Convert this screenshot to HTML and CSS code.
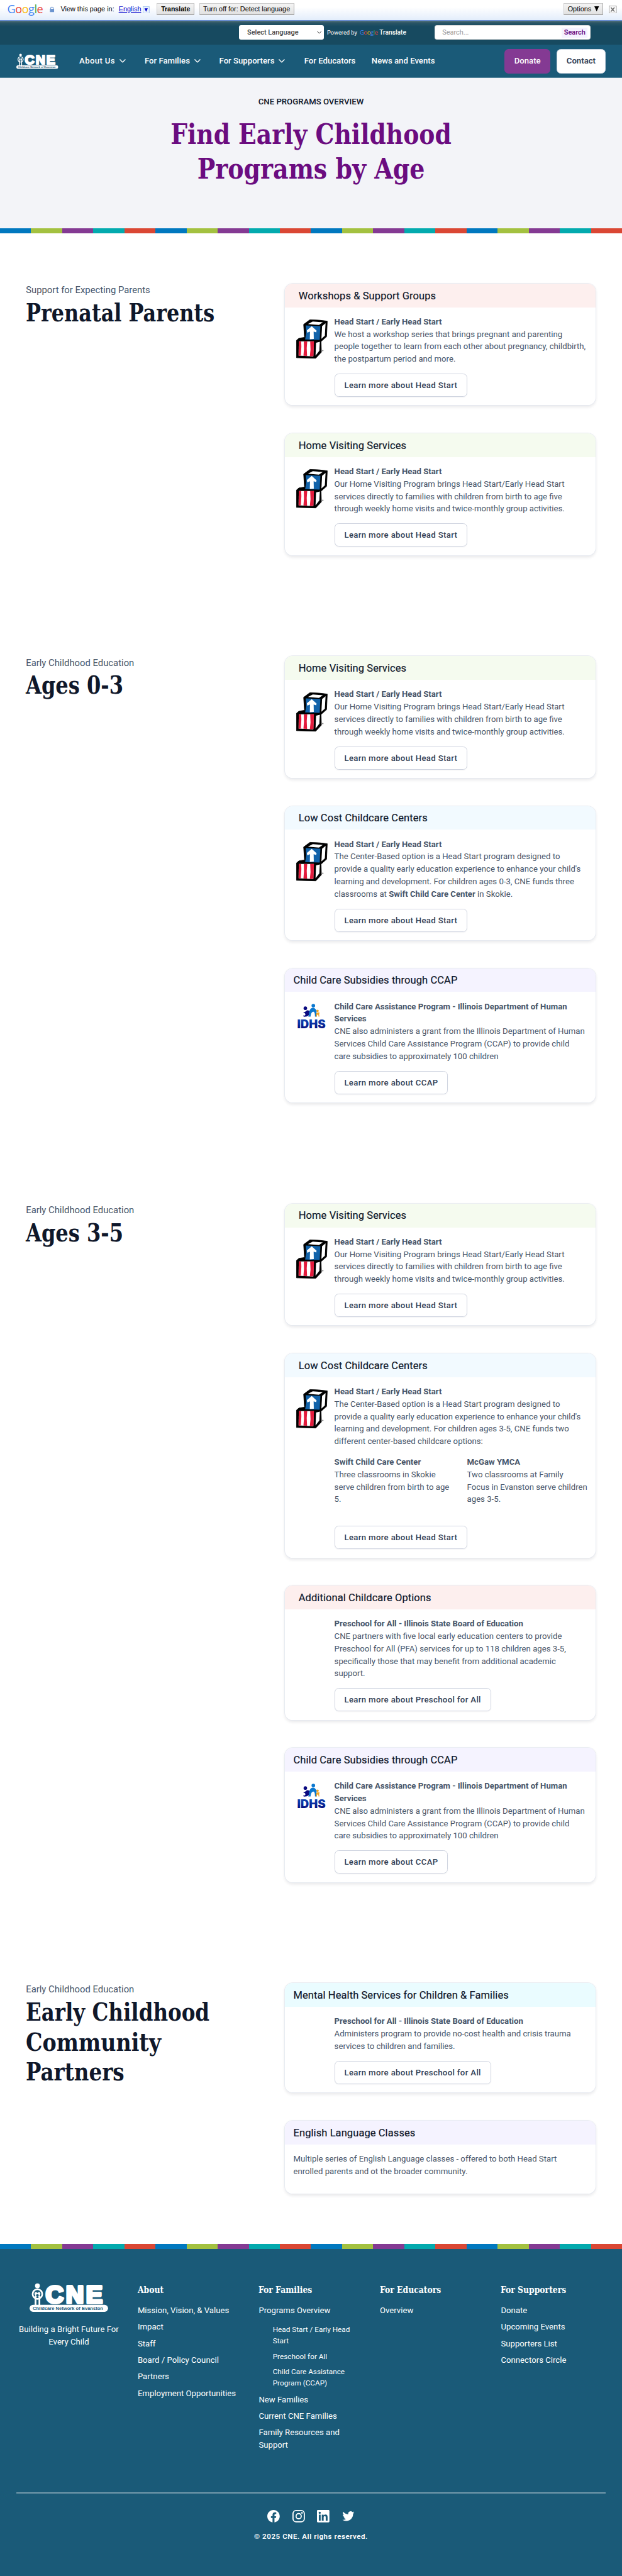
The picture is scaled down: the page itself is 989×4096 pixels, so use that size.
FILE: index.html
```html
<!DOCTYPE html>
<html lang="en">
<head>
<meta charset="utf-8">
<title>CNE Programs Overview</title>
<link rel="stylesheet" href="styles.css">
</head>
<body>
<svg class="defs" aria-hidden="true">
  <defs>
    <symbol id="chevron" viewBox="0 0 12 7"><path d="M1 1l5 5 5-5" fill="none" stroke="currentColor" stroke-width="1.6" stroke-linecap="round" stroke-linejoin="round"/></symbol>
    <symbol id="cne" viewBox="0 0 152 56">
      <circle cx="15.2" cy="5.6" r="4.7" fill="#fff"/>
      <circle cx="15.2" cy="21.5" r="9.3" fill="none" stroke="#fff" stroke-width="3.2"/>
      <path d="M11.5 44V25.5M19 44V25.5" stroke="#fff" stroke-width="3.4"/>
      <path d="M9.5 20.5c.5-3.5 3-3.6 5.7-1 2.700-2.600 5.200-2.500 5.700 1-.3 2.500-1.500 4.500-3 6h-5.400c-1.500-1.500-2.700-3.500-3-6z" fill="#fff"/>
      <circle cx="15.200" cy="24" r="2.600" fill="#1a5a78"/>
      <text x="31" y="38.300" font-family="Liberation Sans, sans-serif" font-weight="700" font-size="48" textLength="110" lengthAdjust="spacing" fill="#fff" stroke="#fff" stroke-width="5" stroke-linejoin="round">CNE</text>
      <rect x="0" y="42.300" width="151.500" height="13.400" rx="6.700" fill="#fff"/>
      <text x="6" y="51.800" font-family="Liberation Sans, sans-serif" font-weight="700" font-size="8.700" textLength="136" lengthAdjust="spacingAndGlyphs" fill="#1a5a78">Childcare Network of Evanston</text>
    </symbol>
    <symbol id="blocks" viewBox="0 0 225 276">
      <path d="M61 54L97 27q50 0 101 8l-4 90-32 28 2 62-33 35-111-3V146l14-12 32-5z" fill="#000" stroke="#000" stroke-width="3" stroke-linejoin="round"/>
      <path d="M86 52l28-15 58 5-22 15z" fill="#fff"/>
      <path d="M168 64l20-17-4 72-20 18z" fill="#fff"/>
      <path d="M73 60l85 4-4 80-84-3 6-38z" fill="#1263aa"/>
      <path d="M108 65l28 25-2 10-15-4 1 42-23 2 1-44-16 6-2-14z" fill="#fff"/>
      <path d="M33 152h87l-3 87-85-4z" fill="#fff"/>
      <path d="M33 152h14l1 30-3 53-13 1zM62 152h20l-3 40 2 45-21-1 3-40zM99 152h22l-3 86-21 1 4-40z" fill="#e31b3c"/>
      <path d="M133 160l22-5-3 52-22 28z" fill="#fff"/>
      <circle cx="172" cy="206" r="4" fill="#777"/>
    </symbol>
    <linearGradient id="idhs-fill" x1="0" y1="0" x2="0" y2="1"><stop offset="0" stop-color="#1450b8"/><stop offset=".5" stop-color="#0a2fa0"/><stop offset="1" stop-color="#02006e"/></linearGradient>
    <symbol id="idhs" viewBox="0 0 56 48">
      <circle cx="16.400" cy="8.700" r="3.400" fill="#0a0a80"/>
      <circle cx="31.800" cy="3.700" r="3.500" fill="#0b78d0"/>
      <circle cx="39.900" cy="13.800" r="2.300" fill="#f5a623"/>
      <path d="M13 16c2 1 4-1 6-3 3-1 6 0 6 4 0 5-4 8.500-12 8l-.5-3c2 1.500 4 .5 4-1.500s-2-3-3.500-2.500z" fill="#0a0a80"/>
      <path d="M22 25c2-3 1-8 3-13 2-4 6-5 9-3.500 3 2 4.500 5 4 9v7.500h-3c0-7-1-9.500-3.500-9.500S27 19 26.500 25z" fill="#0b78d0"/>
      <path d="M37 25c0-5 0-8 3-8s4-1 3.500 1.500c-1 2 0 3.500 0 6.500h-1.700c0-3-.5-4-1.500-4s-1.500 1-1.500 4z" fill="#f5a623"/>
      <text x=".5" y="46.800" font-family="Inter, sans-serif" font-weight="900" font-size="22" textLength="55" lengthAdjust="spacingAndGlyphs" fill="url(#idhs-fill)">IDHS</text>
    </symbol>
  </defs>
</svg>

<div class="gbar">
  <span class="glogo"><b>G</b><b>o</b><b>o</b><b>g</b><b>l</b><b>e</b></span>
  <svg class="lock" viewBox="0 0 10 12"><path d="M2 5.500V4a3 3 0 016 0v1.500" fill="none" stroke="#7a9fd4" stroke-width="1.500"/><rect x=".5" y="4.800" width="9" height="7" fill="#6b94cf"/></svg>
  <span class="gview">View this page in:</span>
  <a class="glang">English</a><svg class="gdrop" viewBox="0 0 13 14"><rect x=".5" y=".5" width="12" height="13" fill="#eaf2fd" stroke="#9fc0ee"/><path d="M3.300 4h6.400l-3.200 6.500z" fill="#00c"/></svg>
  <span class="gbtn gbtn-strong">Translate</span>
  <span class="gbtn gbtn-off">Turn off for: Detect language</span>
  <span class="gbtn gbtn-opt">Options <svg class="tri" viewBox="0 0 9 10"><path d="M0 0h9L4.500 10z"/></svg></span>
  <svg class="gclose" viewBox="0 0 15 15"><rect x=".5" y=".5" width="14" height="14" fill="#fff" stroke="#888"/><path d="M4 3.500l7 8M11 3.500l-7 8" stroke="#777" stroke-width="2"/></svg>
</div>

<div class="topbar">
  <div class="select">Select Language<svg class="sel-arrow"><use href="#chevron"/></svg></div>
  <div class="powered">Powered by <span class="pg"><b>G</b><b>o</b><b>o</b><b>g</b><b>l</b><b>e</b></span> <strong>Translate</strong></div>
  <div class="search"><span>Search...</span><button>Search</button></div>
</div>

<header class="nav">
  <svg class="nav-logo"><use href="#cne"/></svg>
  <nav class="menu">
    <a class="m-about">About Us</a><svg class="chev"><use href="#chevron"/></svg>
    <a class="m-fam">For Families</a><svg class="chev"><use href="#chevron"/></svg>
    <a class="m-sup">For Supporters</a><svg class="chev"><use href="#chevron"/></svg>
    <a class="m-edu">For Educators</a>
    <a class="m-news">News and Events</a>
  </nav>
  <a class="cta donate">Donate</a>
  <a class="cta contact">Contact</a>
</header>

<section class="hero">
  <p>CNE PROGRAMS OVERVIEW</p>
  <h1><span class="fit f-find">Find Early Childhood</span><span class="fit f-prog">Programs by Age</span></h1>
</section>
<div class="stripes"></div>

<main>
<section class="group">
  <div class="intro"><p>Support for Expecting Parents</p><h2><span class="fit f-prenatal">Prenatal Parents</span></h2></div>
  <div class="cards">
    <article class="card">
      <h3 class="pink">Workshops &amp; Support Groups</h3>
      <div class="body"><svg class="blocks"><use href="#blocks"/></svg><div class="text"><b>Head Start / Early Head Start</b><br>We host a workshop series that brings pregnant and parenting<br>people together to learn from each other about pregnancy, childbirth,<br>the postpartum period and more.<a class="btn">Learn more about Head Start</a></div></div>
    </article>
    <article class="card">
      <h3 class="green">Home Visiting Services</h3>
      <div class="body"><svg class="blocks"><use href="#blocks"/></svg><div class="text"><b>Head Start / Early Head Start</b><br>Our Home Visiting Program brings Head Start/Early Head Start<br>services directly to families with children from birth to age five<br>through weekly home visits and twice-monthly group activities.<a class="btn">Learn more about Head Start</a></div></div>
    </article>
  </div>
</section>

<section class="group">
  <div class="intro"><p>Early Childhood Education</p><h2><span class="fit f-ages">Ages 0-3</span></h2></div>
  <div class="cards">
    <article class="card">
      <h3 class="green">Home Visiting Services</h3>
      <div class="body"><svg class="blocks"><use href="#blocks"/></svg><div class="text"><b>Head Start / Early Head Start</b><br>Our Home Visiting Program brings Head Start/Early Head Start<br>services directly to families with children from birth to age five<br>through weekly home visits and twice-monthly group activities.<a class="btn">Learn more about Head Start</a></div></div>
    </article>
    <article class="card">
      <h3 class="blue">Low Cost Childcare Centers</h3>
      <div class="body"><svg class="blocks"><use href="#blocks"/></svg><div class="text"><b>Head Start / Early Head Start</b><br>The Center-Based option is a Head Start program designed to<br>provide a quality early education experience to enhance your child's<br>learning and development. For children ages 0-3, CNE funds three<br>classrooms at <b>Swift Child Care Center</b> in Skokie.<a class="btn">Learn more about Head Start</a></div></div>
    </article>
    <article class="card">
      <h3 class="violet flush">Child Care Subsidies through CCAP</h3>
      <div class="body"><svg class="idhs"><use href="#idhs"/></svg><div class="text"><b>Child Care Assistance Program - Illinois Department of Human<br>Services</b><br>CNE also administers a grant from the Illinois Department of Human<br>Services Child Care Assistance Program (CCAP) to provide child<br>care subsidies to approximately 100 children<a class="btn">Learn more about CCAP</a></div></div>
    </article>
  </div>
</section>

<section class="group">
  <div class="intro"><p>Early Childhood Education</p><h2><span class="fit f-ages">Ages 3-5</span></h2></div>
  <div class="cards">
    <article class="card">
      <h3 class="green">Home Visiting Services</h3>
      <div class="body"><svg class="blocks"><use href="#blocks"/></svg><div class="text"><b>Head Start / Early Head Start</b><br>Our Home Visiting Program brings Head Start/Early Head Start<br>services directly to families with children from birth to age five<br>through weekly home visits and twice-monthly group activities.<a class="btn">Learn more about Head Start</a></div></div>
    </article>
    <article class="card">
      <h3 class="blue">Low Cost Childcare Centers</h3>
      <div class="body"><svg class="blocks"><use href="#blocks"/></svg><div class="text"><b>Head Start / Early Head Start</b><br>The Center-Based option is a Head Start program designed to<br>provide a quality early education experience to enhance your child's<br>learning and development. For children ages 3-5, CNE funds two<br>different center-based childcare options:
        <div class="split"><div><b>Swift Child Care Center</b><br>Three classrooms in Skokie<br>serve children from birth to age<br>5.</div><div><b>McGaw YMCA</b><br>Two classrooms at Family<br>Focus in Evanston serve children<br>ages 3-5.</div></div>
        <a class="btn">Learn more about Head Start</a></div></div>
    </article>
    <article class="card">
      <h3 class="pink">Additional Childcare Options</h3>
      <div class="body"><span class="blank"></span><div class="text"><b>Preschool for All - Illinois State Board of Education</b><br>CNE partners with five local early education centers to provide<br>Preschool for All (PFA) services for up to 118 children ages 3-5,<br>specifically those that may benefit from additional academic<br>support.<a class="btn">Learn more about Preschool for All</a></div></div>
    </article>
    <article class="card">
      <h3 class="violet flush">Child Care Subsidies through CCAP</h3>
      <div class="body"><svg class="idhs"><use href="#idhs"/></svg><div class="text"><b>Child Care Assistance Program - Illinois Department of Human<br>Services</b><br>CNE also administers a grant from the Illinois Department of Human<br>Services Child Care Assistance Program (CCAP) to provide child<br>care subsidies to approximately 100 children<a class="btn">Learn more about CCAP</a></div></div>
    </article>
  </div>
</section>

<section class="group last">
  <div class="intro"><p>Early Childhood Education</p><h2><span class="fit f-early">Early Childhood</span><span class="fit f-comm">Community</span><span class="fit f-part">Partners</span></h2></div>
  <div class="cards">
    <article class="card">
      <h3 class="cyan flush">Mental Health Services for Children &amp; Families</h3>
      <div class="body"><span class="blank"></span><div class="text"><b>Preschool for All - Illinois State Board of Education</b><br>Administers program to provide no-cost health and crisis trauma<br>services to children and families.<a class="btn">Learn more about Preschool for All</a></div></div>
    </article>
    <article class="card">
      <h3 class="violet flush">English Language Classes</h3>
      <div class="body plain">Multiple series of English Language classes - offered to both Head Start<br>enrolled parents and ot the broader community.</div>
    </article>
  </div>
</section>
</main>

<div class="stripes"></div>
<footer>
  <div class="cols">
    <div class="brand"><svg><use href="#cne"/></svg><p>Building a Bright Future For<br>Every Child</p></div>
    <div><h4>About</h4><ul><li>Mission, Vision, &amp; Values</li><li>Impact</li><li>Staff</li><li>Board / Policy Council</li><li>Partners</li><li>Employment Opportunities</li></ul></div>
    <div><h4>For Families</h4><ul><li>Programs Overview</li><li class="sub"><span>Head Start / Early Head<br>Start</span><span>Preschool for All</span><span>Child Care Assistance<br>Program (CCAP)</span></li><li>New Families</li><li>Current CNE Families</li><li>Family Resources and<br>Support</li></ul></div>
    <div><h4>For Educators</h4><ul><li>Overview</li></ul></div>
    <div><h4>For Supporters</h4><ul><li>Donate</li><li>Upcoming Events</li><li>Supporters List</li><li>Connectors Circle</li></ul></div>
  </div>
  <div class="legal">
    <div class="social">
      <svg viewBox="0 0 24 24"><path d="M22 12c0-5.523-4.477-10-10-10S2 6.477 2 12c0 4.991 3.657 9.128 8.438 9.878v-6.987h-2.540V12h2.540V9.797c0-2.506 1.492-3.890 3.777-3.890 1.094 0 2.238.195 2.238.195v2.460h-1.260c-1.243 0-1.630.771-1.630 1.562V12h2.773l-.443 2.890h-2.330v6.988C18.343 21.128 22 16.991 22 12z" transform="translate(-2.400 -2.400) scale(1.200)"/></svg>
      <svg viewBox="0 0 24 24" class="insta"><rect x="1.100" y="1.100" width="21.800" height="21.800" rx="6"/><circle cx="12" cy="12" r="5"/><circle cx="18.400" cy="5.600" r=".7"/></svg>
      <svg viewBox="0 0 24 24"><path fill-rule="evenodd" d="M1.800 0h20.400C23.200 0 24 .8 24 1.700v20.600c0 .9-.8 1.700-1.800 1.700H1.800C.8 24 0 23.200 0 22.300V1.700C0 .8.800 0 1.800 0zM3.600 9v11.500h3.500V9zM5.300 3.300a2.100 2.100 0 100 4.200 2.100 2.100 0 000-4.200zM9.300 9v11.500h3.600v-5.700c0-1.500.3-3 2.200-3s1.800 1.800 1.800 3.100v5.600h3.600v-6.300c0-3.100-.7-5.500-4.300-5.500-1.700 0-2.900.9-3.400 1.900V9z"/></svg>
      <svg viewBox="0 0 24 24"><path d="M8.290 20.251c7.547 0 11.675-6.253 11.675-11.675 0-.178 0-.355-.012-.530A8.348 8.348 0 0022 5.920a8.190 8.190 0 01-2.357.646 4.118 4.118 0 001.804-2.270 8.224 8.224 0 01-2.605.996 4.107 4.107 0 00-6.993 3.743 11.650 11.650 0 01-8.457-4.287 4.106 4.106 0 001.270 5.477A4.072 4.072 0 012.800 9.713v.052a4.105 4.105 0 003.292 4.022 4.095 4.095 0 01-1.853.070 4.108 4.108 0 003.834 2.850A8.233 8.233 0 012 18.407a11.616 11.616 0 006.290 1.840" transform="translate(-1.800 -2) scale(1.150)"/></svg>
    </div>
    <p>© 2025 CNE. All righs reserved.</p>
  </div>
</footer>
</body>
</html>
```
FILE: styles.css
```css
* { box-sizing: border-box; }
/* All dimensions are in rem; the root size sets the overall scale. */
html { font-size: 8.2417px; background: #fff; }
body {
  display: flex;
  flex-direction: column;
  margin: 0;
  height: 4096px;
  font: 1.6rem/2.4rem Roboto, "Noto Sans", sans-serif;
  color: #475569;
  white-space: nowrap;
}
body > * { flex: none; }
p, h1, h2, h3, h4, ul { margin: 0; padding: 0; list-style: none; }
svg { display: block; flex: none; }
.defs { position: absolute; width: 0; height: 0; }

/* Translate toolbar */
.gbar {
  display: flex;
  align-items: center;
  height: 4rem;
  padding: 0 1rem .3rem 1.4rem;
  background: linear-gradient(#fff 35%, #e3edfb);
  border-bottom: 1px solid #6b90da;
  font: 1.325rem/1.6rem "Liberation Sans", Arial, sans-serif;
  color: #000;
}
.glogo { width: 8.2rem; font: 500 2.2rem/2.4rem "Open Sans", Lato, sans-serif; letter-spacing: -.06rem; }
.glogo b, .pg b { font-weight: inherit; color: #4285f4; }
.glogo b:nth-child(2), .glogo b:nth-child(6), .pg b:nth-child(2), .pg b:nth-child(6) { color: #ea4335; }
.glogo b:nth-child(3), .pg b:nth-child(3) { color: #fbbc05; }
.glogo b:nth-child(5), .pg b:nth-child(5) { color: #34a853; }
.lock { width: .9rem; height: 1.2rem; }
.gview { margin-left: 1.2rem; width: 11.2rem; }
.glang { color: #00c; text-decoration: underline; }
.gdrop { width: 1.3rem; height: 1.4rem; margin: .2rem 1.4rem 0 .3rem; }
.gbtn {
  height: 2.3rem;
  line-height: 2rem;
  text-align: center;
  background: linear-gradient(#f4f4f4, #e2e2e2);
  border: 1px solid #ccc;
  border-right-color: #a5a5a5;
  border-bottom: 2px solid #b0b0b0;
}
.gbtn-strong { width: 7.3rem; font-weight: 700; font-size: 1.28rem; }
.gbtn-off { width: 18.3rem; margin-left: .9rem; }
.gbtn-opt { width: 7.7rem; margin-left: auto; display: flex; justify-content: center; align-items: center; gap: .6rem; }
.tri { width: .9rem; height: 1rem; }
.gclose { width: 1.5rem; height: 1.5rem; margin-left: 1.1rem; }

/* Utility row */
.topbar { display: flex; align-items: center; height: 4.6rem; padding: 0 6.1rem 0 46.1rem; background: linear-gradient(#57737a, #2a5565 .4rem, #174a60 1.1rem); color: #fff; }
.select { display: flex; align-items: center; justify-content: space-between; width: 16.4rem; height: 2.8rem; padding: 0 .4rem 0 1.6rem; border-radius: .4rem; background: #fff; color: #444; font-size: 1.33rem; font-weight: 500; }
.sel-arrow { width: .9rem; height: .6rem; color: #333; }
.powered { display: flex; align-items: center; margin-left: .6rem; font-size: 1.12rem; }
.pg { margin: 0 .5rem; width: 3.3rem; font: 500 1.15rem/1.6rem "Open Sans", sans-serif; letter-spacing: -.05rem; }
.powered strong { font-size: 1.24rem; font-weight: 500; }
.search { display: flex; align-items: center; justify-content: space-between; width: 30rem; height: 2.8rem; margin-left: auto; padding: 0 .4rem 0 1.3rem; border: 1px solid #ddd; border-radius: .4rem; background: #fff; color: #999; font-size: 1.33rem; }
.search button { width: 5rem; height: 2rem; padding: 0; border: 0; background: #f5f2ff; color: #6b0c80; font: 600 1.33rem/2rem Roboto, sans-serif; }

/* Main navigation */
.nav { display: flex; align-items: center; height: 6.5rem; padding: 0 3.2rem; background: #1a5a78; border-bottom: 1px solid #5d8ba1; color: #fff; font-weight: 500; }
.nav-logo { width: 8.1rem; height: 3rem; }
.menu { display: flex; align-items: center; }
.menu a { flex: none; }
.m-about { width: 7.8rem; margin-left: 4rem; letter-spacing: .043rem; }
.m-fam { width: 9.6rem; margin-left: 3.6rem; }
.m-sup { width: 11.5rem; margin-left: 3.6rem; }
.m-edu { width: 13rem; margin-left: 3.7rem; }
.chev { width: 1.2rem; height: .7rem; }
.cta { height: 4.7rem; border-radius: .8rem; line-height: 4.6rem; text-align: center; }
.donate { width: 8.9rem; margin-left: auto; background: #843a93; }
.contact { width: 9.4rem; margin-left: 1.2rem; background: #fff; color: #334155; font-weight: 600; border: 1px solid #cbd5e1; line-height: 4.45rem; }

/* Hero */
.hero { height: 28.9rem; padding-top: 3.3rem; background: #f3f4f8; text-align: center; }
.hero p { color: #0f172a; font-weight: 500; }
h1 { margin-top: 1.8rem; color: #6b0c80; font: 700 5.46rem/6.7rem "DejaVu Serif Condensed", "DejaVu Serif", serif; font-stretch: condensed; }
.fit { display: block; transform-origin: 0 50%; }
h1 .fit { transform-origin: 50% 50%; }
.f-find { transform: scaleX(.931); }
.f-prog { transform: scaleX(.938); }
.f-prenatal { transform: scaleX(.919); }
.f-ages { transform: scaleX(.925); }
.f-early { transform: scaleX(.9366); }
.f-comm { transform: scaleX(.96); }
.f-part { transform: scaleX(.938); }
.stripes { height: 1rem; background: repeating-linear-gradient(90deg, #0078bf 0 5%, #a3c140 5% 10%, #843a93 10% 15%, #03aaae 15% 20%, #da4734 20% 25%); }

/* Program groups */
.group { display: flex; justify-content: space-between; padding: 9.6rem 5rem 9.7rem; }
.group.last { padding-bottom: 9.6rem; }
.intro { width: 40rem; }
.intro p { font-size: 1.8rem; line-height: 2.7rem; }
h2 { padding-top: .2rem; color: #0f172a; font: 700 4.68rem/5.76rem "DejaVu Serif Condensed", "DejaVu Serif", serif; font-stretch: condensed; }
.cards { display: flex; flex-direction: column; gap: 5.4rem; width: 59.9rem; margin: .1rem .1rem .1rem 0; }
.card { border-radius: 1.5rem; background: #fff; overflow: hidden; box-shadow: 0 0 0 .1rem #e5e9f0, 0 .3rem .6rem rgba(15, 23, 42, .1); }
h3 { height: 4.6rem; padding: .1rem 2.6rem 0; font: 400 2rem/4.6rem Roboto, sans-serif; letter-spacing: .012rem; color: #0f172a; -webkit-text-stroke: .2px #0f172a; }
h3.flush { padding-left: 1.6rem; }
.pink { background: #fdefee; }
.green { background: #f5fbef; }
.blue { background: #f2faff; }
.violet { background: #f5f3ff; }
.cyan { background: #eafcff; }
.body { display: flex; padding: 1.6rem; }
.plain { display: block; padding-bottom: 3.1rem; }
.blocks { width: 7.5rem; height: 9.2rem; margin: -.1rem .5rem -6rem -.1rem; }
.idhs { width: 5.6rem; height: 4.8rem; margin: .7rem 1.6rem 0 .7rem; }
.blank { width: 7.9rem; flex: none; }
.text { flex: 1; }
.btn { display: block; width: fit-content; height: 4.51rem; margin-top: 1.6rem; padding: 0 1.8rem; border: 1px solid #cfd4e0; border-radius: .8rem; box-shadow: 0 1px 2px rgba(15, 23, 42, .05); color: #334155; font-weight: 500; line-height: 4.35rem; letter-spacing: .043rem; }
.split { display: grid; grid-template-columns: 1fr 1fr; gap: 2.4rem; margin: 1.6rem 0 3.9rem; }

/* Footer */
body > footer { flex: 1; padding: 6.4rem 3.2rem 0; background: #1a5a78; color: #fff; }
.cols { display: grid; grid-template-columns: repeat(5, 1fr); gap: 3.2rem; height: 40.6rem; }
.brand { text-align: center; }
.brand svg { width: 15.2rem; height: 5.6rem; margin: .15rem auto 2.2rem; }
h4 { width: fit-content; font: 700 1.75rem/2.8rem "DejaVu Serif Condensed", "DejaVu Serif", serif; font-stretch: condensed; transform: scaleX(.955); transform-origin: 0 50%; }
.cols ul { margin-top: 1.45rem; }
.cols li { margin-bottom: .8rem; }
.cols .sub { margin: 0; padding: .77rem 0 0 2.7rem; font-size: 1.43rem; line-height: 2.15rem; }
.sub span { display: block; margin-bottom: .83rem; }
.legal { padding-top: 3.4rem; box-shadow: inset 0 .2rem #80a2b3; text-align: center; }
.social { display: flex; justify-content: center; gap: 2.4rem; }
.social svg { width: 2.4rem; height: 2.4rem; fill: #fff; }
.social .insta { fill: none; stroke: #fff; stroke-width: 2.2; }
.legal p { margin-top: 1.5rem; font-size: 1.4rem; font-weight: 600; letter-spacing: .07rem; }
```
